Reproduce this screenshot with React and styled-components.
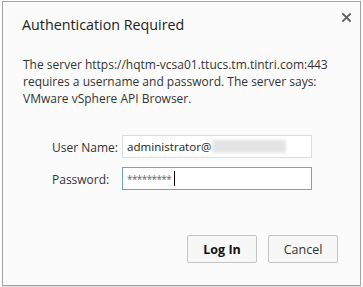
import React from 'react';
import styled, { createGlobalStyle } from 'styled-components';

const GlobalStyle = createGlobalStyle`
  html, body {
    margin: 0;
    padding: 0;
    background: #ffffff;
  }
  body {
    font-family: 'Open Sans', 'Noto Sans', sans-serif;
  }
`;

const Page = styled.div`
  width: 363px;
  height: 287px;
  padding: 1px 2px;
  box-sizing: border-box;
`;

const Dialog = styled.div`
  width: 359px;
  height: 285px;
  box-sizing: border-box;
  background: #fbfbfb;
  border: 1px solid #a3a3a3;
  box-shadow: 0 1px 1px rgba(0, 0, 0, 0.12);
  display: flex;
  flex-direction: column;
  padding: 13px 22px 22px 19px;
  position: relative;
`;

const Header = styled.div`
  display: flex;
  align-items: center;
  height: 20px;
`;

const Title = styled.h1`
  margin: 0;
  font-size: 14.3px;
  font-weight: 400;
  color: #222222;
  line-height: 20px;
`;

const CloseButton = styled.button`
  position: absolute;
  top: 9px;
  right: 8px;
  width: 12px;
  height: 12px;
  padding: 0;
  border: none;
  background: transparent;
  display: flex;
  align-items: center;
  justify-content: center;
`;

const Message = styled.p`
  margin: 21px 0 0 1px;
  font-size: 12px;
  line-height: 17px;
  color: #333333;
`;

const Form = styled.div`
  margin: 28px 0 0 30px;
  display: grid;
  grid-template-columns: 70px 190px;
  row-gap: 9px;
  align-items: center;
`;

const Label = styled.label`
  font-size: 12px;
  color: #333333;
  padding-top: 2px;
`;

const Field = styled.div`
  height: 23px;
  box-sizing: border-box;
  background: #ffffff;
  border: 1px solid ${(p) => (p.focused ? '#6f9de8' : '#dcdcdc')};
  display: flex;
  align-items: center;
  padding-left: 4px;
  font-size: 11.6px;
  color: #222222;
`;

const Blurred = styled.span`
  display: inline-block;
  width: 74px;
  height: 13px;
  margin-left: 1px;
  background: #e4e4e4;
  filter: blur(1.5px);
`;

const Stars = styled.span`
  font-size: 10px;
  letter-spacing: -0.6px;
  color: #666666;
  padding-top: 1px;
`;

const Caret = styled.span`
  display: inline-block;
  width: 1px;
  height: 15px;
  margin-left: 3px;
  background: #000000;
`;

const Footer = styled.div`
  margin-top: auto;
  display: flex;
  justify-content: flex-end;
  gap: 11px;
`;

const Button = styled.button`
  width: 70px;
  height: 28px;
  box-sizing: border-box;
  border: 1px solid #c4c4c4;
  border-radius: 2px;
  background: #f7f7f7;
  font-family: 'Open Sans', 'Noto Sans', sans-serif;
  font-size: 12.5px;
  font-weight: ${(p) => (p.primary ? 700 : 400)};
  color: ${(p) => (p.primary ? '#111111' : '#333333')};
  padding: 0;
`;

export default function App() {
  return (
    <>
      <GlobalStyle />
      <Page>
        <Dialog>
          <Header>
            <Title>Authentication Required</Title>
          </Header>
          <CloseButton aria-label="Close">
            <svg width="9" height="9" viewBox="0 0 9 9">
              <path
                d="M1 1 L8 8 M8 1 L1 8"
                stroke="#5f5f5f"
                strokeWidth="1.8"
                strokeLinecap="square"
              />
            </svg>
          </CloseButton>
          <Message>
            The server https://hqtm-vcsa01.ttucs.tm.tintri.com:443
            <br />
            requires a username and password. The server says:
            <br />
            VMware vSphere API Browser.
          </Message>
          <Form>
            <Label>User Name:</Label>
            <Field>
              administrator@
              <Blurred />
            </Field>
            <Label>Password:</Label>
            <Field focused>
              <Stars>*********</Stars>
              <Caret />
            </Field>
          </Form>
          <Footer>
            <Button primary>Log In</Button>
            <Button>Cancel</Button>
          </Footer>
        </Dialog>
      </Page>
    </>
  );
}
